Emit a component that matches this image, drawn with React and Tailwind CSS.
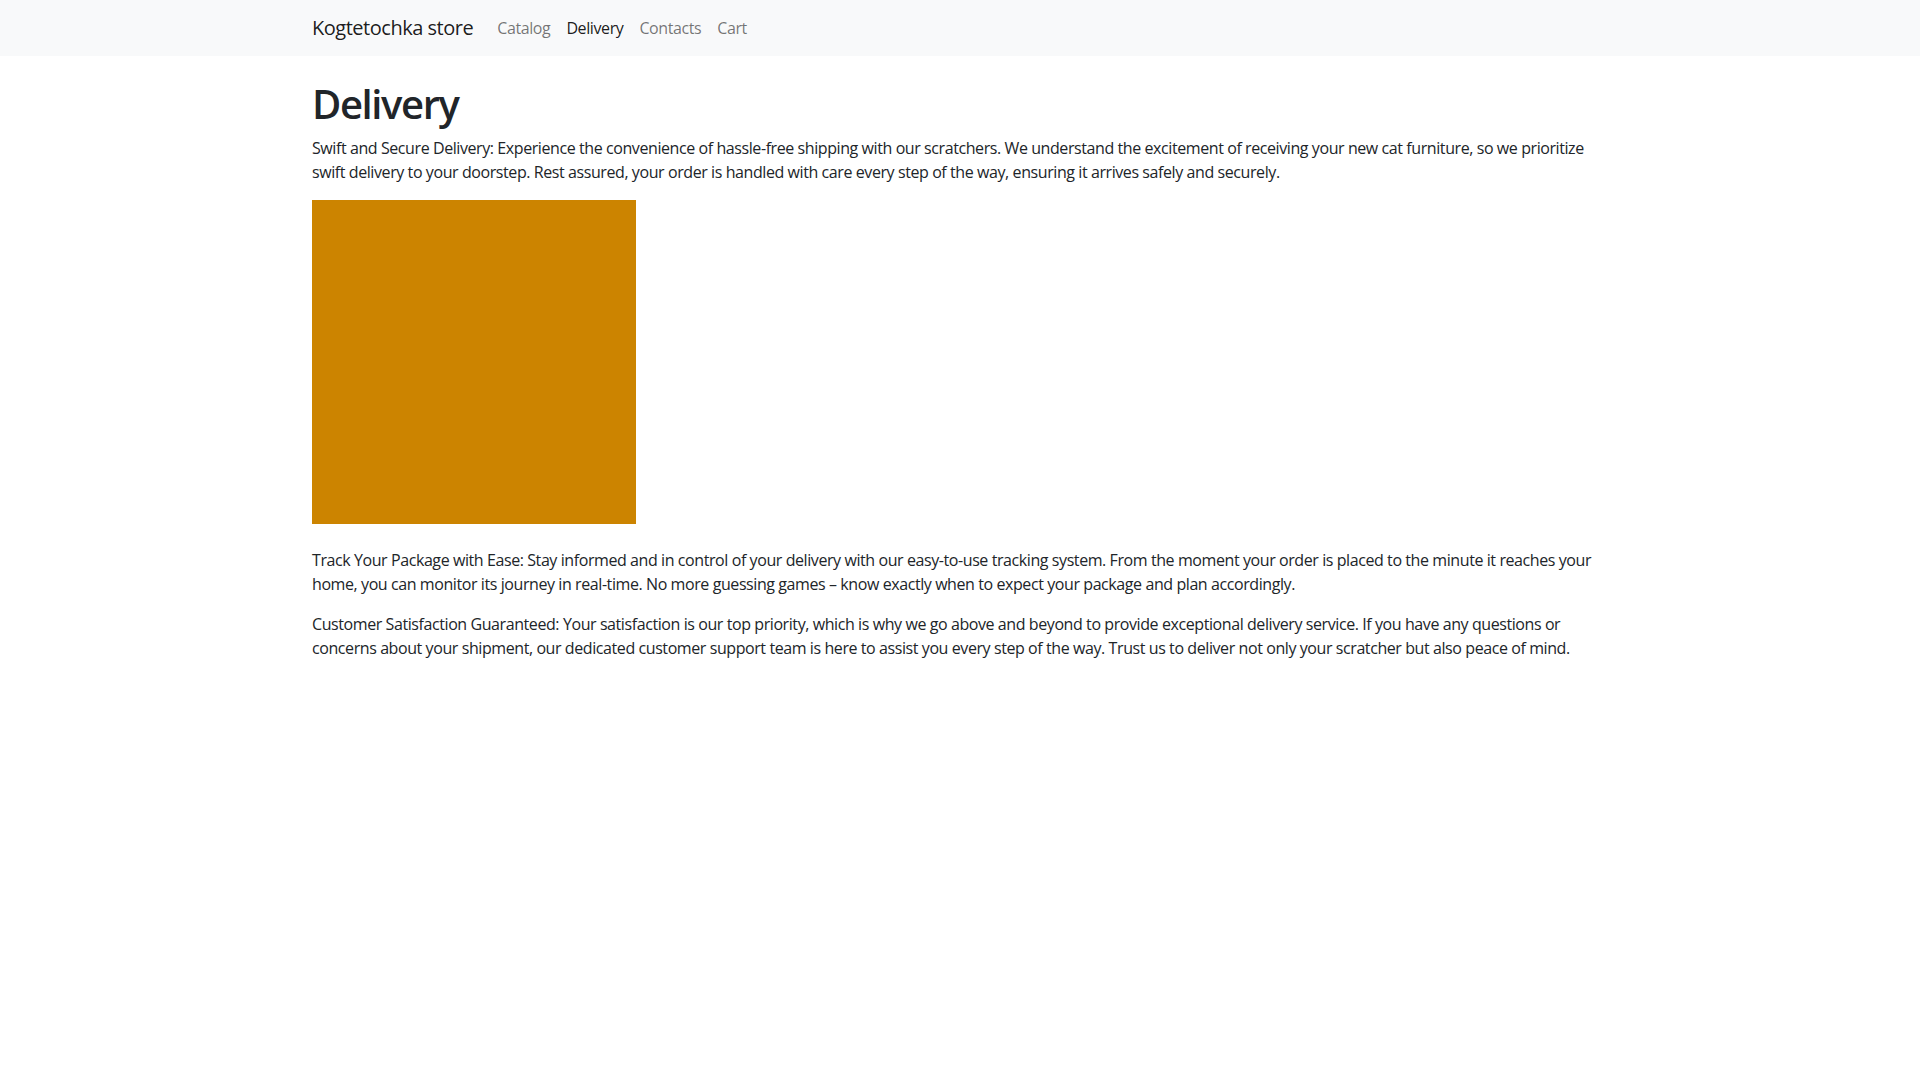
export default function App() {
  return (
    <div className="min-h-screen bg-white text-[#212529] font-['Open_Sans',sans-serif] tracking-[-0.03em]">
      <nav className="bg-[#f8f9fa] h-[56px]">
        <div className="w-[1320px] mx-auto px-3 h-full flex items-center">
          <span className="text-[20px] leading-[30px] text-[rgba(0,0,0,0.9)] mr-4">Kogtetochka store</span>
          <div className="flex text-[16px] leading-6 tracking-[-0.025em]">
            <span className="px-2 text-[rgba(0,0,0,0.55)]">Catalog</span>
            <span className="px-2 text-[rgba(0,0,0,0.9)]">Delivery</span>
            <span className="px-2 text-[rgba(0,0,0,0.55)]">Contacts</span>
            <span className="px-2 text-[rgba(0,0,0,0.55)]">Cart</span>
          </div>
        </div>
      </nav>
      <main className="w-[1320px] mx-auto px-3 pt-6 text-[16px] leading-6 tracking-[-0.026em]">
        <h1 className="text-[40px] leading-[48px] font-semibold tracking-[-0.035em] mb-2">Delivery</h1>
        <p className="mb-4 whitespace-nowrap">
          Swift and Secure Delivery: Experience the convenience of hassle-free shipping with our scratchers. We understand the excitement of receiving your new cat furniture, so we prioritize
          <br />
          swift delivery to your doorstep. Rest assured, your order is handled with care every step of the way, ensuring it arrives safely and securely.
        </p>
        <div className="w-[324px] h-[324px] bg-[#cc8400] mb-[24px]" />
        <p className="mb-4 whitespace-nowrap">
          Track Your Package with Ease: Stay informed and in control of your delivery with our easy-to-use tracking system. From the moment your order is placed to the minute it reaches your
          <br />
          home, you can monitor its journey in real-time. No more guessing games – know exactly when to expect your package and plan accordingly.
        </p>
        <p className="mb-4 whitespace-nowrap">
          Customer Satisfaction Guaranteed: Your satisfaction is our top priority, which is why we go above and beyond to provide exceptional delivery service. If you have any questions or
          <br />
          concerns about your shipment, our dedicated customer support team is here to assist you every step of the way. Trust us to deliver not only your scratcher but also peace of mind.
        </p>
      </main>
    </div>
  );
}
